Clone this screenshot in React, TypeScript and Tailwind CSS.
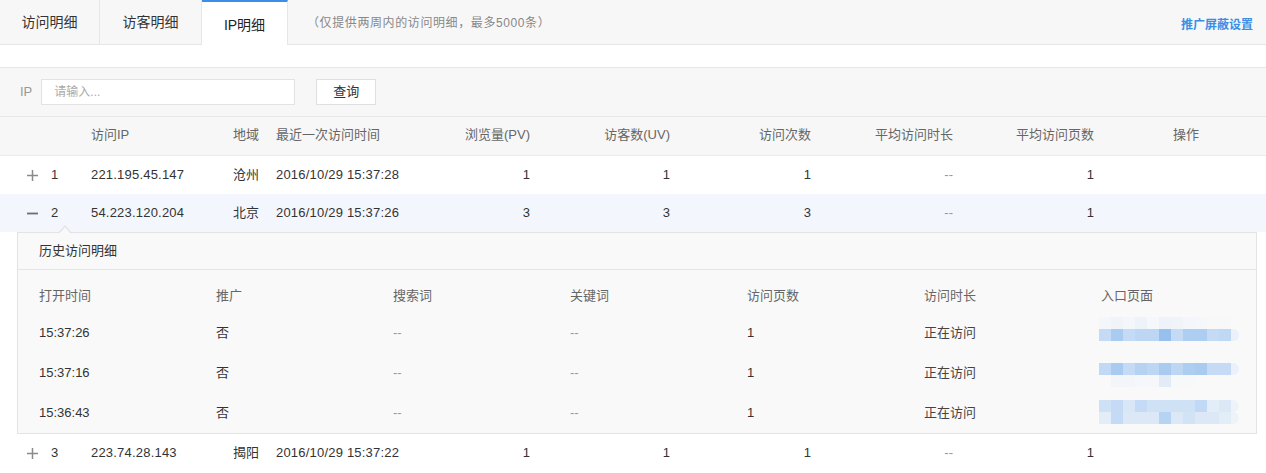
import React from "react";

const FONT = "font-['Liberation_Sans','Noto_Sans_CJK_SC',sans-serif]";

const MAIN_COLS =
  "grid grid-cols-[91px_142px_43px_124px_130px_140px_141px_142px_141px_1fr] items-center";

function PlusIcon() {
  return (
    <svg width="11" height="11" viewBox="0 0 11 11" className="block">
      <line x1="0" y1="5.5" x2="11" y2="5.5" stroke="#8a8a8a" strokeWidth="1.5" />
      <line x1="5.5" y1="0" x2="5.5" y2="11" stroke="#8a8a8a" strokeWidth="1.5" />
    </svg>
  );
}

function MinusIcon() {
  return (
    <svg width="11" height="11" viewBox="0 0 11 11" className="block">
      <line x1="0" y1="5.5" x2="11" y2="5.5" stroke="#6e6e6e" strokeWidth="1.8" />
    </svg>
  );
}

type Row = {
  n: string;
  ip: string;
  area: string;
  time: string;
  pv: string;
  uv: string;
  visits: string;
  dur: string;
  pages: string;
};

function MainRow({ r, open, bg }: { r: Row; open?: boolean; bg: string }) {
  return (
    <div className={`${MAIN_COLS} h-[38px] text-[13px] text-[#333] ${bg}`}>
      <div className="flex items-center pl-[27px]">
        {open ? <MinusIcon /> : <PlusIcon />}
        <span className="ml-[13px]">{r.n}</span>
      </div>
      <div className="tracking-[0.2px]">{r.ip}</div>
      <div>{r.area}</div>
      <div className="tracking-[0.2px]">{r.time}</div>
      <div className="text-right">{r.pv}</div>
      <div className="text-right">{r.uv}</div>
      <div className="text-right">{r.visits}</div>
      <div className="text-right text-[#999]">{r.dur}</div>
      <div className="text-right">{r.pages}</div>
      <div />
    </div>
  );
}

const SUB_COLS = "grid grid-cols-[177px_177px_177px_177px_177px_177px_1fr] items-center";

function Mosaic({ rows, shift }: { rows: string[][]; shift: string }) {
  return (
    <div className={`flex flex-col ${shift}`}>
      {rows.map((row, i) => (
        <div key={i} className="flex">
          {row.map((c, j) => (
            <div
              key={j}
              className={`h-[12px] ${j === row.length - 1 ? "w-[8px] rounded-r-[6px]" : "w-[12px]"} ${c}`}
            />
          ))}
        </div>
      ))}
    </div>
  );
}

const M1 = [
  [
    "bg-[#f3f6fa]",
    "bg-[#f0f4f9]",
    "bg-[#f3f6fa]",
    "bg-[#eef3f9]",
    "bg-[#f5f7fa]",
    "bg-[#eef3f9]",
    "bg-[#f0f4f9]",
    "bg-[#f3f6fa]",
    "bg-[#f5f7fa]",
    "bg-[#f8f8f9]",
    "bg-[#f8f8f9]",
    "bg-[#f9f9f9]",
  ],
  [
    "bg-[#c5dbf5]",
    "bg-[#a9cbf0]",
    "bg-[#c5dbf5]",
    "bg-[#bdd6f3]",
    "bg-[#bdd6f3]",
    "bg-[#97c0ee]",
    "bg-[#c5dbf5]",
    "bg-[#aecef1]",
    "bg-[#aecef1]",
    "bg-[#c5dbf5]",
    "bg-[#bfd8f4]",
    "bg-[#eaf1fa]",
  ],
];

const M2 = [
  [
    "bg-[#c1d9f4]",
    "bg-[#a9cbf0]",
    "bg-[#c5dbf5]",
    "bg-[#b5d2f2]",
    "bg-[#bdd6f3]",
    "bg-[#a9cbf0]",
    "bg-[#bdd6f3]",
    "bg-[#aecef1]",
    "bg-[#a9cbf0]",
    "bg-[#c5dbf5]",
    "bg-[#c5dbf5]",
    "bg-[#eaf1fa]",
  ],
  [
    "bg-[#f9f9f9]",
    "bg-[#f3f5f9]",
    "bg-[#f3f5f9]",
    "bg-[#f5f7fa]",
    "bg-[#f5f7fa]",
    "bg-[#e2ebf6]",
    "bg-[#f7f8fa]",
    "bg-[#f7f8fa]",
    "bg-[#f9f9f9]",
    "bg-[#f9f9f9]",
    "bg-[#f9f9f9]",
    "bg-[#f9f9f9]",
  ],
];

const M3 = [
  [
    "bg-[#cfe1f5]",
    "bg-[#c5dbf5]",
    "bg-[#d8e6f7]",
    "bg-[#c5dbf5]",
    "bg-[#cfe1f5]",
    "bg-[#cfe1f5]",
    "bg-[#cfe1f5]",
    "bg-[#cfe1f5]",
    "bg-[#c1d9f4]",
    "bg-[#e3edf8]",
    "bg-[#dde8f6]",
    "bg-[#eef3f9]",
  ],
  [
    "bg-[#e3edf8]",
    "bg-[#c5dbf5]",
    "bg-[#dde8f6]",
    "bg-[#dde8f6]",
    "bg-[#dde8f6]",
    "bg-[#b7d3f3]",
    "bg-[#dde8f6]",
    "bg-[#d3e3f6]",
    "bg-[#dde8f6]",
    "bg-[#dde8f6]",
    "bg-[#e3edf8]",
    "bg-[#eef3f9]",
  ],
];

const history = [
  { t: "15:37:26", m: M1, shift: "-mt-[8px]" },
  { t: "15:37:16", m: M2, shift: "mt-[4px]" },
  { t: "15:36:43", m: M3, shift: "-mt-[2px]" },
];

export default function App() {
  const rows: Row[] = [
    { n: "1", ip: "221.195.45.147", area: "沧州", time: "2016/10/29 15:37:28", pv: "1", uv: "1", visits: "1", dur: "--", pages: "1" },
    { n: "2", ip: "54.223.120.204", area: "北京", time: "2016/10/29 15:37:26", pv: "3", uv: "3", visits: "3", dur: "--", pages: "1" },
    { n: "3", ip: "223.74.28.143", area: "揭阳", time: "2016/10/29 15:37:22", pv: "1", uv: "1", visits: "1", dur: "--", pages: "1" },
  ];

  return (
    <div className={`w-[1266px] h-[473px] overflow-hidden bg-white ${FONT}`}>
      {/* Tabs */}
      <div className="flex h-[45px] bg-[#f7f7f7] border-b border-[#e6e6e6]">
        <div className="w-[100px] flex items-center justify-center border-r border-[#e6e6e6] text-[14px] text-[#333]">
          访问明细
        </div>
        <div className="w-[102px] flex items-center justify-center border-r border-[#e6e6e6] text-[14px] text-[#333]">
          访客明细
        </div>
        <div className="w-[86px] -mb-px flex items-center justify-center bg-white border-t-2 border-t-[#3d8ee8] border-r border-r-[#e6e6e6] text-[14px] text-[#222] pt-[3px]">
          IP明细
        </div>
        <div className="flex items-center pl-[19px] pt-[2px] text-[12px] tracking-[0.6px] text-[#888]">
          （仅提供两周内的访问明细，最多5000条）
        </div>
        <div className="flex-1" />
        <div className="flex items-center pr-[13px] pt-[5px] text-[12px] font-bold text-[#3a8ee6]">
          推广屏蔽设置
        </div>
      </div>

      {/* spacer */}
      <div className="h-[22px] bg-white" />

      {/* Filter */}
      <div className="h-[50px] flex items-center px-[20px] bg-[#f7f7f7] border-y border-[#e8e8e8]">
        <span className="text-[13px] text-[#999] mr-[9px]">IP</span>
        <div className="w-[254px] h-[26px] flex items-center px-[12px] bg-white border border-[#e3e3e3] text-[12px] text-[#aaa]">
          请输入...
        </div>
        <div className="ml-[21px] w-[60px] h-[26px] flex items-center justify-center bg-white border border-[#e0e0e0] text-[13px] text-[#333]">
          查询
        </div>
      </div>

      {/* Table header */}
      <div className={`${MAIN_COLS} h-[39px] bg-[#f7f7f7] border-b border-[#ebebeb] text-[13px] text-[#666] pb-[3px]`}>
        <div />
        <div>访问IP</div>
        <div>地域</div>
        <div>最近一次访问时间</div>
        <div className="text-right">浏览量(PV)</div>
        <div className="text-right">访客数(UV)</div>
        <div className="text-right">访问次数</div>
        <div className="text-right">平均访问时长</div>
        <div className="text-right">平均访问页数</div>
        <div className="pl-[79px]">操作</div>
      </div>

      <MainRow r={rows[0]} bg="bg-white" />
      <MainRow r={rows[1]} open bg="bg-[#f3f7fd]" />

      {/* Expanded panel */}
      <div className="bg-white pl-[17px] pr-[9px]">
        <div className="relative bg-[#f9f9f9] border border-[#e3e3e3]">
          <div className="absolute left-[40px] -top-[8px] w-0 h-0 border-l-[7px] border-r-[7px] border-b-[8px] border-l-transparent border-r-transparent border-b-[#e3e3e3]" />
          <div className="absolute left-[41px] -top-[6px] w-0 h-0 border-l-[6px] border-r-[6px] border-b-[7px] border-l-transparent border-r-transparent border-b-[#f9f9f9]" />
          <div className="h-[37px] flex items-center pl-[21px] border-b border-[#e6e6e6] text-[13px] text-[#333]">
            历史访问明细
          </div>
          <div className="pt-[9px] pl-[21px]">
            <div className={`${SUB_COLS} h-[34px] text-[13px] text-[#666]`}>
              <div>打开时间</div>
              <div>推广</div>
              <div>搜索词</div>
              <div>关键词</div>
              <div>访问页数</div>
              <div>访问时长</div>
              <div>入口页面</div>
            </div>
            {history.map((h) => (
              <div key={h.t} className={`${SUB_COLS} h-[40px] text-[13px] text-[#333]`}>
                <div>{h.t}</div>
                <div>否</div>
                <div className="text-[#999]">--</div>
                <div className="text-[#999]">--</div>
                <div>1</div>
                <div className="text-[#444]">正在访问</div>
                <div className="flex items-center -ml-[2px]">
                  <Mosaic rows={h.m} shift={h.shift} />
                </div>
              </div>
            ))}
          </div>
        </div>
      </div>

      <MainRow r={rows[2]} bg="bg-white" />
    </div>
  );
}
